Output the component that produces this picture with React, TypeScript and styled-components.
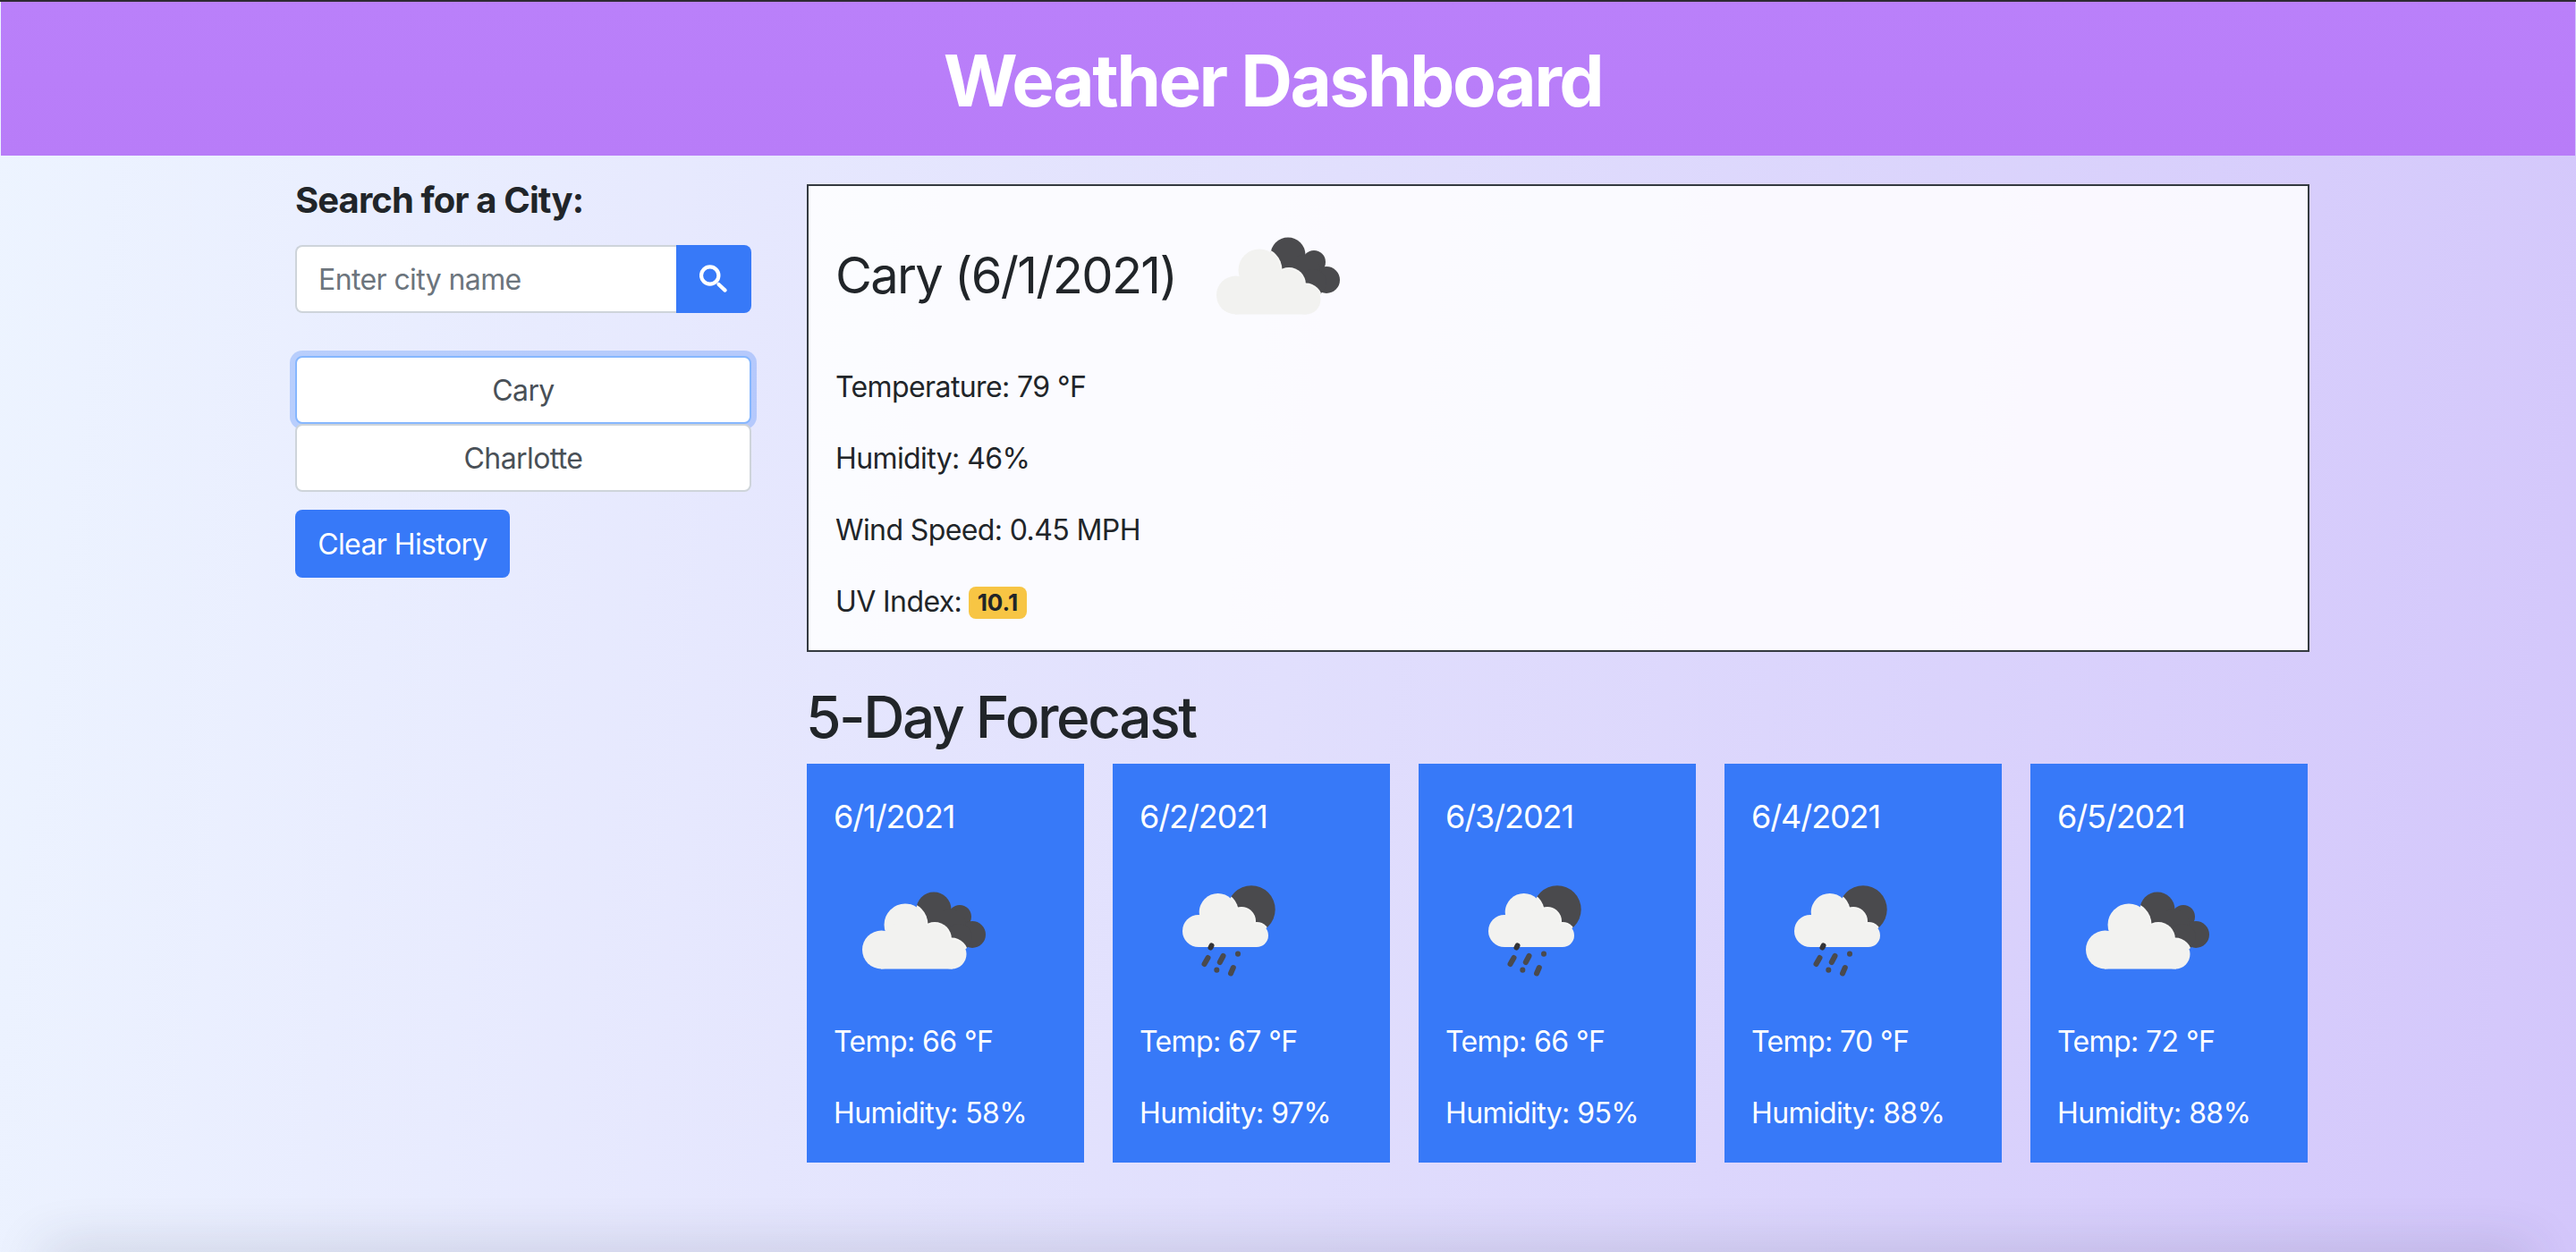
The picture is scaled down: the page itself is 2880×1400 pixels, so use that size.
import React, { useId } from "react";
import styled, { createGlobalStyle } from "styled-components";

const GlobalStyle = createGlobalStyle`
  * { box-sizing: border-box; }
  html, body { margin: 0; padding: 0; }
  body {
    font-family: Inter, "Liberation Sans", sans-serif;
    font-size: 32px;
    line-height: 48px;
    letter-spacing: -0.6px;
    color: #212529;
  }
`;

const CLOUD_WHITE = "#f2f2f0";
const CLOUD_DARK = "#4a4a4d";

type Circle = [number, number, number];

const ICONS: Record<string, { back: Circle[]; front: Circle[]; base: number[]; rain?: boolean }> = {
  clouds: {
    back: [[112, 77, 19.5], [141, 85, 13], [155, 105, 15], [130, 95, 18], [140, 108, 15]],
    front: [[53.5, 122, 21.5], [80, 94, 23.5], [113, 110, 17], [132, 127, 16.5], [85, 115, 28]],
    base: [53, 110, 80, 33.5],
  },
  rain: {
    back: [[125, 77, 26.7]],
    front: [[66, 101, 18], [87.7, 80, 21], [114, 90, 14], [131, 106, 13], [92, 98, 20]],
    base: [66, 95, 65, 24],
    rain: true,
  },
};

function WeatherIcon({ kind }: { kind: "clouds" | "rain" }) {
  const id = useId();
  const icon = ICONS[kind];
  return (
    <IconSvg viewBox="0 0 200 200" aria-hidden="true">
      <defs>
        <clipPath id={id}>
          {icon.back.map(([cx, cy, r], i) => (
            <circle key={i} cx={cx} cy={cy} r={r} />
          ))}
        </clipPath>
      </defs>
      <g fill={CLOUD_DARK}>
        {icon.back.map(([cx, cy, r], i) => (
          <circle key={i} cx={cx} cy={cy} r={r} />
        ))}
      </g>
      <g clipPath={`url(#${id})`} fill="#f6f6f4">
        {icon.front.map(([cx, cy, r], i) => (
          <circle key={i} cx={cx} cy={cy} r={r + 2} />
        ))}
        <rect x={icon.base[0]} y={icon.base[1]} width={icon.base[2]} height={icon.base[3]} />
      </g>
      <g fill={CLOUD_WHITE}>
        {icon.front.map(([cx, cy, r], i) => (
          <circle key={i} cx={cx} cy={cy} r={r} />
        ))}
        <rect x={icon.base[0]} y={icon.base[1]} width={icon.base[2]} height={icon.base[3]} />
      </g>
      {icon.rain && (
        <g stroke={CLOUD_DARK} strokeWidth="6" strokeLinecap="round" fill="none">
          <path d="M80.5 117.5 L79.5 119.5" stroke="#333336" />
          <path d="M76.5 131 L72.5 138" />
          <path d="M93.5 129 L89.8 136" />
          <path d="M110 126.5 L110 126.8" />
          <path d="M86.3 144.5 L86.3 144.8" />
          <path d="M104.8 142 L102 148.5" />
        </g>
      )}
    </IconSvg>
  );
}

function SearchIcon() {
  return (
    <svg width="32" height="32" viewBox="0 0 32 32" fill="none" stroke="#fff" strokeWidth="4.2" strokeLinecap="round" aria-hidden="true">
      <circle cx="11.7" cy="12" r="9.7" />
      <path d="M21.5 22 L28.6 28.6" />
    </svg>
  );
}

const Page = styled.div`
  position: relative;
  width: 2880px;
  height: 1400px;
  overflow: hidden;
  border-top: 2px solid #2d2a32;
  padding: 0 1px;
  background: linear-gradient(97deg, #edf4ff 0%, #e1dffd 50%, #d3c6fb 100%);

  &::after {
    content: "";
    position: absolute;
    left: 50px;
    right: 50px;
    bottom: -30px;
    height: 30px;
    box-shadow: 0 0 60px 0 rgba(40, 50, 70, 0.24);
  }
`;

const Header = styled.header`
  height: 172px;
  display: flex;
  align-items: center;
  justify-content: center;
  background: linear-gradient(180deg, #ba80fa, #b87cf8);
`;

const Title = styled.h1`
  margin: 4px 0 0 -34px;
  color: #fff;
  font-size: 80px;
  line-height: 96px;
  font-weight: 700;
  letter-spacing: -2.5px;
`;

const Main = styled.main`
  display: grid;
  grid-template-columns: 510px 1680px;
  column-gap: 62px;
  padding: 32px 0 0 329px;
`;

const Sidebar = styled.aside`
  display: flex;
  flex-direction: column;
  align-items: flex-start;
`;

const SearchHeading = styled.h5`
  margin: 0 0 32px;
  font-size: 40px;
  line-height: 36px;
  font-weight: 700;
  letter-spacing: -0.9px;
`;

const SearchGroup = styled.div`
  display: flex;
  width: 100%;
  height: 76px;
  margin-bottom: 48px;
`;

const CityInput = styled.input`
  flex: 1;
  min-width: 0;
  padding: 2px 24px 0;
  font: inherit;
  letter-spacing: inherit;
  color: #212529;
  background: #fff;
  border: 2px solid #ced4da;
  border-right: 0;
  border-radius: 8px 0 0 8px;
  outline: none;

  &::placeholder {
    color: #6c757d;
    opacity: 1;
  }
`;

const SearchButton = styled.button`
  width: 84px;
  display: flex;
  align-items: center;
  justify-content: center;
  padding: 0;
  background: #3779f8;
  border: 0;
  border-radius: 0 8px 8px 0;
`;

const CityButton = styled.button<{ $focused?: boolean }>`
  width: 100%;
  height: 76px;
  padding: 2px 0 0;
  font: inherit;
  letter-spacing: inherit;
  color: #495057;
  background: #fff;
  border: 2px solid ${(p) => (p.$focused ? "#86b7fe" : "#ced4da")};
  border-radius: 8px;
  box-shadow: ${(p) => (p.$focused ? "0 0 0 6px rgba(55, 121, 248, 0.28)" : "none")};
`;

const ClearButton = styled.button`
  height: 76px;
  width: 240px;
  margin-top: 20px;
  padding: 2px 0 0;
  font: inherit;
  letter-spacing: inherit;
  color: #fff;
  background: #3779f8;
  border: 0;
  border-radius: 8px;
`;

const Content = styled.section`
  display: flex;
  flex-direction: column;
`;

const CurrentBox = styled.div`
  height: 523px;
  padding: 0 30px;
  background: rgba(255, 255, 255, 0.85);
  border: 2px solid #343a40;
`;

const CityTitle = styled.h3`
  display: flex;
  align-items: center;
  gap: 13px;
  margin: 0;
  font-size: 56px;
  line-height: 67px;
  font-weight: 400;
  letter-spacing: -1.7px;
`;

const IconSvg = styled.svg`
  display: block;
  flex: none;
  width: 200px;
  height: 200px;
`;

const Stat = styled.p`
  margin: 0;
  padding: 1px 0 31px;
`;

const UvBadge = styled.span`
  display: inline-block;
  margin-left: -1px;
  padding: 0 10px;
  font-size: 26px;
  line-height: 36px;
  font-weight: 700;
  letter-spacing: 0;
  vertical-align: 1px;
  background: #f7c544;
  border-radius: 8px;
`;

const ForecastHeading = styled.h2`
  margin: 35px 0 14px -1px;
  font-size: 64px;
  line-height: 76px;
  font-weight: 510;
  letter-spacing: -2.45px;
`;

const CardRow = styled.div`
  display: flex;
  gap: 32px;
`;

const DayCard = styled.article`
  flex: 0 0 310px;
  height: 446px;
  padding: 30px 30px 0;
  color: #fff;
  background: #3779f8;
`;

const CardDate = styled.h5`
  margin: 0;
  height: 56px;
  font-size: 36px;
  line-height: 58px;
  font-weight: 400;
  letter-spacing: -1.1px;
`;

const CardStat = styled.p`
  margin: 0;
  padding: 1px 0 31px;
`;

const days: { date: string; icon: "clouds" | "rain"; temp: number; humidity: number }[] = [
  { date: "6/1/2021", icon: "clouds", temp: 66, humidity: 58 },
  { date: "6/2/2021", icon: "rain", temp: 67, humidity: 97 },
  { date: "6/3/2021", icon: "rain", temp: 66, humidity: 95 },
  { date: "6/4/2021", icon: "rain", temp: 70, humidity: 88 },
  { date: "6/5/2021", icon: "clouds", temp: 72, humidity: 88 },
];

export default function App() {
  return (
    <Page>
      <GlobalStyle />
      <Header>
        <Title>Weather Dashboard</Title>
      </Header>
      <Main>
        <Sidebar>
          <SearchHeading>Search for a City:</SearchHeading>
          <SearchGroup>
            <CityInput placeholder="Enter city name" />
            <SearchButton aria-label="Search">
              <SearchIcon />
            </SearchButton>
          </SearchGroup>
          <CityButton $focused>Cary</CityButton>
          <CityButton>Charlotte</CityButton>
          <ClearButton>Clear History</ClearButton>
        </Sidebar>
        <Content>
          <CurrentBox>
            <CityTitle>
              Cary (6/1/2021)
              <WeatherIcon kind="clouds" />
            </CityTitle>
            <Stat>Temperature: 79 °F</Stat>
            <Stat>Humidity: 46%</Stat>
            <Stat>Wind Speed: 0.45 MPH</Stat>
            <Stat>
              UV Index: <UvBadge>10.1</UvBadge>
            </Stat>
          </CurrentBox>
          <ForecastHeading>5-Day Forecast</ForecastHeading>
          <CardRow>
            {days.map((d) => (
              <DayCard key={d.date}>
                <CardDate>{d.date}</CardDate>
                <WeatherIcon kind={d.icon} />
                <CardStat>Temp: {d.temp} °F</CardStat>
                <CardStat>Humidity: {d.humidity}%</CardStat>
              </DayCard>
            ))}
          </CardRow>
        </Content>
      </Main>
    </Page>
  );
}
